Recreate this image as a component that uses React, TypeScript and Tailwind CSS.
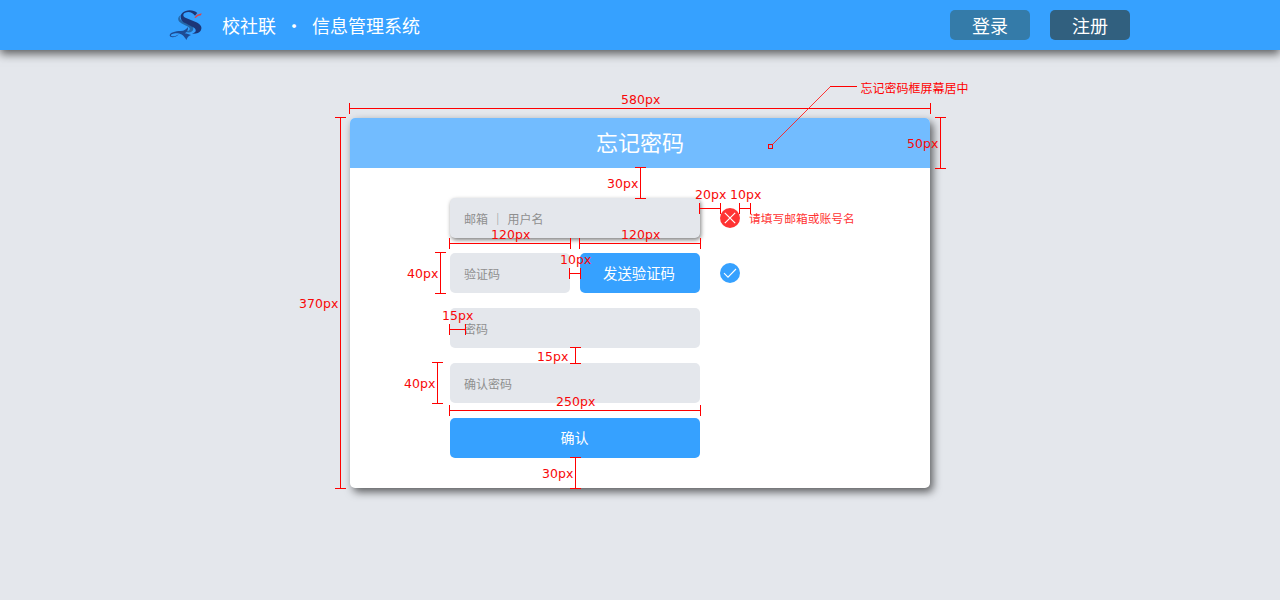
import React from "react";

type Dimension = {
  dir: "h" | "v";
  at: number;
  from: number;
  to: number;
  label: string;
  x: number;
  y: number;
};

const dimensions: Dimension[] = [
  { dir: "h", at: 108, from: 349, to: 930, label: "580px", x: 640.7, y: 104 },
  { dir: "v", at: 340, from: 117, to: 488, label: "370px", x: 318.7, y: 308 },
  { dir: "v", at: 940, from: 117, to: 168, label: "50px", x: 922.7, y: 148 },
  { dir: "v", at: 640, from: 167, to: 198, label: "30px", x: 622.7, y: 188 },
  { dir: "h", at: 208, from: 699, to: 720, label: "20px", x: 710.7, y: 199 },
  { dir: "h", at: 208, from: 739, to: 750, label: "10px", x: 745.7, y: 199 },
  { dir: "h", at: 243, from: 449, to: 570, label: "120px", x: 510.7, y: 239 },
  { dir: "h", at: 243, from: 579, to: 700, label: "120px", x: 640.7, y: 239 },
  { dir: "h", at: 273, from: 569, to: 580, label: "10px", x: 575.7, y: 264 },
  { dir: "v", at: 440, from: 252, to: 293, label: "40px", x: 422.7, y: 278 },
  { dir: "h", at: 329, from: 449, to: 465, label: "15px", x: 457.7, y: 320 },
  { dir: "v", at: 575, from: 347, to: 363, label: "15px", x: 552.7, y: 361 },
  { dir: "v", at: 437, from: 362, to: 403, label: "40px", x: 419.7, y: 388 },
  { dir: "h", at: 410, from: 449, to: 700, label: "250px", x: 575.7, y: 406 },
  { dir: "v", at: 575, from: 457, to: 488, label: "30px", x: 557.7, y: 478 },
];

function dimensionPath({ dir, at, from, to }: Dimension) {
  const c = at + 0.5;
  const a = from + 0.5;
  const b = to + 0.5;
  return dir === "h"
    ? `M${a} ${c}H${b}M${a} ${at - 5}V${at + 6}M${b} ${at - 5}V${at + 6}`
    : `M${c} ${a}V${b}M${at - 5} ${a}H${at + 6}M${at - 5} ${b}H${at + 6}`;
}

function Annotations() {
  return (
    <svg
      className="pointer-events-none absolute inset-0 h-[600px] w-[1280px]"
      viewBox="0 0 1280 600"
    >
      {dimensions.map((d) => (
        <g key={`${d.dir}-${d.at}-${d.from}`}>
          <path d={dimensionPath(d)} fill="none" stroke="#ff0000" shapeRendering="crispEdges" />
          <text
            x={d.x}
            y={d.y}
            textAnchor="middle"
            className="fill-[#f80808] font-['DejaVu_Sans',sans-serif] text-[12.5px]"
          >
            {d.label}
          </text>
        </g>
      ))}
      <path d="M772 145L830.5 86.5" fill="none" stroke="#ff2020" strokeWidth="0.9" />
      <path d="M830 86.5H857M768.5 144.5H772.5V148.5H768.5Z" fill="none" stroke="#ff0000" shapeRendering="crispEdges" />
      <text x="860.5" y="92.5" className="fill-[#ff0000] text-[12px]">
        忘记密码框屏幕居中
      </text>
    </svg>
  );
}

function Logo() {
  return (
    <svg className="h-8 w-[34px]" viewBox="10 14 102 96">
      <path
        d="M46 32C36 37 35 47 43 54C53 62 68 65 72 72C74 79 67 82 58 81C68 88 82 84 83 74C84 61 60 57 50 50C42 45 40 38 46 32Z"
        fill="#2468aa"
      />
      <path
        d="M46 43C41 29 55 18 72 18C81 18 89 21 95 26L88 34C81 23 68 20 58 25C50 29 52 37 61 41L92 54C105 60 111 69 105 79C101 85 92 89 79 88C91 84 94 77 85 70L60 57C51 53 48 49 46 43Z"
        fill="#1c3678"
      />
      <path
        d="M40 90C30 101 12 101 12 93C12 85 29 80 45 80C56 80 62 75 67 68C68 78 63 85 57 87C64 88 70 91 76 92C69 95 65 99 62 107C56 96 48 88 36 87C24 86 15 90 16 94C20 98 31 96 40 90Z"
        fill="#1e4b94"
      />
      <path d="M86 40L94 31L108 27L106 33L97 35L90 41Z" fill="#df4448" />
      <path d="M94 28L100 21" stroke="#6f9fca" strokeWidth="1.5" />
    </svg>
  );
}

function Header() {
  return (
    <header className="flex h-[50px] justify-center bg-[#36a1ff] text-[18px] leading-[30px] text-white shadow-[0_4px_9px_rgba(0,0,0,0.6)]">
      <div className="flex w-[960px] items-center pl-[9px]">
        <Logo />
        <h1 className="ml-[19px] flex">
          <span>校社联</span>
          <span className="w-9 text-center">·</span>
          <span>信息管理系统</span>
        </h1>
        <nav className="-mr-[10px] ml-auto flex gap-5">
          <button className="h-[30px] w-20 rounded-[5px] bg-[#347ba9]">登录</button>
          <button className="h-[30px] w-20 rounded-[5px] bg-[#31607f]">注册</button>
        </nav>
      </div>
    </header>
  );
}

const field =
  "h-10 rounded-[5px] bg-[#e4e7ec] px-[14px] text-[12px] text-[#8f8f8f] placeholder:text-[#8f8f8f] placeholder:opacity-100 outline-none";

function ErrorIcon() {
  return (
    <svg className="size-5" viewBox="0 0 20 20">
      <circle cx="10" cy="10" r="10" fill="#ff3333" />
      <path d="M4.8 4.8L15.2 15.2M15.2 4.8L4.8 15.2" stroke="#ffffff" strokeWidth="1.2" />
    </svg>
  );
}

function SuccessIcon() {
  return (
    <svg className="size-5" viewBox="0 0 20 20">
      <circle cx="10" cy="10" r="10" fill="#36a1ff" />
      <path d="M4 10.2L8 14.2L16 6" fill="none" stroke="#ffffff" strokeWidth="1.1" />
    </svg>
  );
}

export default function App() {
  return (
    <div className="relative h-[600px] w-[1280px] overflow-hidden bg-[#e4e7ec] font-['Noto_Sans_CJK_SC',sans-serif] font-normal">
      <Header />
      <main className="mx-auto mt-[68px] h-[370px] w-[580px] rounded-[5px] bg-white shadow-[3px_4px_9px_rgba(0,0,0,0.6)]">
        <h2 className="h-[50px] rounded-t-[5px] bg-[#72bcff] text-center text-[22px] leading-[47px] text-white">
          忘记密码
        </h2>
        <form className="flex flex-col gap-[15px] pt-[30px] pl-[100px]">
          <div className="flex items-center">
            <input
              className={`${field} w-[250px] shadow-[1px_2px_4px_rgba(0,0,0,0.5)] placeholder:[word-spacing:1px]`}
              placeholder="邮箱 ｜ 用户名"
            />
            <span className="ml-5">
              <ErrorIcon />
            </span>
            <span className="-mt-px ml-[9px] text-[11.75px] text-[#ff3333]">请填写邮箱或账号名</span>
          </div>
          <div className="flex items-center">
            <input className={`${field} w-[120px] pt-px`} placeholder="验证码" />
            <button
              type="button"
              className="ml-[10px] h-10 w-[120px] rounded-[5px] bg-[#36a1ff] pr-[2px] text-[14.4px] text-white"
            >
              发送验证码
            </button>
            <span className="ml-5">
              <SuccessIcon />
            </span>
          </div>
          <input className={`${field} w-[250px]`} placeholder="密码" />
          <input className={`${field} w-[250px]`} placeholder="确认密码" />
          <button type="button" className="h-10 w-[250px] rounded-[5px] bg-[#36a1ff] pr-px pb-px text-[14px] text-white">
            确认
          </button>
        </form>
      </main>
      <Annotations />
    </div>
  );
}
